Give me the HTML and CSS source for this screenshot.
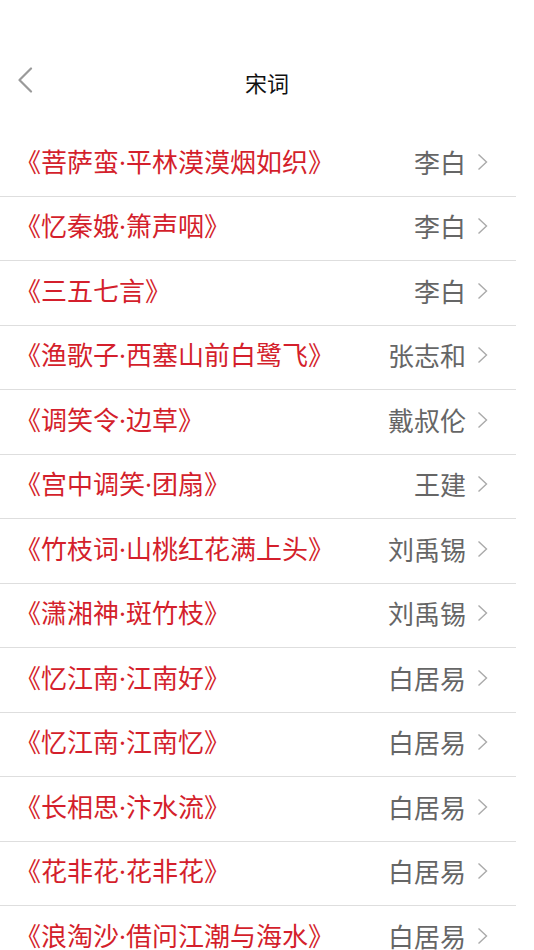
FILE: index.html
```html
<!DOCTYPE html>
<html lang="zh-CN">
<head>
<meta charset="utf-8">
<title>宋词</title>
<link rel="stylesheet" href="styles.css">
</head>
<body>
<div class="page">
  <header class="navbar">
    <span class="back">
      <svg width="16" height="26" viewBox="0 0 16 26"><path d="M14 1.5 L2.5 13 L14 24.5" fill="none" stroke="#9a9a9a" stroke-width="2.2" stroke-linecap="round" stroke-linejoin="round"/></svg>
    </span>
    <h1 class="title">宋词</h1>
  </header>
  <ul class="list">
    <li class="row"><span class="poem">《菩萨蛮·平林漠漠烟如织》</span><span class="author">李白</span><svg class="chev" width="11" height="18" viewBox="0 0 11 18"><path d="M1.5 1.5 L9.5 9 L1.5 16.5" fill="none" stroke="#aaaaaa" stroke-width="1.4"/></svg></li>
    <li class="row"><span class="poem">《忆秦娥·箫声咽》</span><span class="author">李白</span><svg class="chev" width="11" height="18" viewBox="0 0 11 18"><path d="M1.5 1.5 L9.5 9 L1.5 16.5" fill="none" stroke="#aaaaaa" stroke-width="1.4"/></svg></li>
    <li class="row"><span class="poem">《三五七言》</span><span class="author">李白</span><svg class="chev" width="11" height="18" viewBox="0 0 11 18"><path d="M1.5 1.5 L9.5 9 L1.5 16.5" fill="none" stroke="#aaaaaa" stroke-width="1.4"/></svg></li>
    <li class="row"><span class="poem">《渔歌子·西塞山前白鹭飞》</span><span class="author">张志和</span><svg class="chev" width="11" height="18" viewBox="0 0 11 18"><path d="M1.5 1.5 L9.5 9 L1.5 16.5" fill="none" stroke="#aaaaaa" stroke-width="1.4"/></svg></li>
    <li class="row"><span class="poem">《调笑令·边草》</span><span class="author">戴叔伦</span><svg class="chev" width="11" height="18" viewBox="0 0 11 18"><path d="M1.5 1.5 L9.5 9 L1.5 16.5" fill="none" stroke="#aaaaaa" stroke-width="1.4"/></svg></li>
    <li class="row"><span class="poem">《宫中调笑·团扇》</span><span class="author">王建</span><svg class="chev" width="11" height="18" viewBox="0 0 11 18"><path d="M1.5 1.5 L9.5 9 L1.5 16.5" fill="none" stroke="#aaaaaa" stroke-width="1.4"/></svg></li>
    <li class="row"><span class="poem">《竹枝词·山桃红花满上头》</span><span class="author">刘禹锡</span><svg class="chev" width="11" height="18" viewBox="0 0 11 18"><path d="M1.5 1.5 L9.5 9 L1.5 16.5" fill="none" stroke="#aaaaaa" stroke-width="1.4"/></svg></li>
    <li class="row"><span class="poem">《潇湘神·斑竹枝》</span><span class="author">刘禹锡</span><svg class="chev" width="11" height="18" viewBox="0 0 11 18"><path d="M1.5 1.5 L9.5 9 L1.5 16.5" fill="none" stroke="#aaaaaa" stroke-width="1.4"/></svg></li>
    <li class="row"><span class="poem">《忆江南·江南好》</span><span class="author">白居易</span><svg class="chev" width="11" height="18" viewBox="0 0 11 18"><path d="M1.5 1.5 L9.5 9 L1.5 16.5" fill="none" stroke="#aaaaaa" stroke-width="1.4"/></svg></li>
    <li class="row"><span class="poem">《忆江南·江南忆》</span><span class="author">白居易</span><svg class="chev" width="11" height="18" viewBox="0 0 11 18"><path d="M1.5 1.5 L9.5 9 L1.5 16.5" fill="none" stroke="#aaaaaa" stroke-width="1.4"/></svg></li>
    <li class="row"><span class="poem">《长相思·汴水流》</span><span class="author">白居易</span><svg class="chev" width="11" height="18" viewBox="0 0 11 18"><path d="M1.5 1.5 L9.5 9 L1.5 16.5" fill="none" stroke="#aaaaaa" stroke-width="1.4"/></svg></li>
    <li class="row"><span class="poem">《花非花·花非花》</span><span class="author">白居易</span><svg class="chev" width="11" height="18" viewBox="0 0 11 18"><path d="M1.5 1.5 L9.5 9 L1.5 16.5" fill="none" stroke="#aaaaaa" stroke-width="1.4"/></svg></li>
    <li class="row"><span class="poem">《浪淘沙·借问江潮与海水》</span><span class="author">白居易</span><svg class="chev" width="11" height="18" viewBox="0 0 11 18"><path d="M1.5 1.5 L9.5 9 L1.5 16.5" fill="none" stroke="#aaaaaa" stroke-width="1.4"/></svg></li>
  </ul>
</div>
</body>
</html>
```
FILE: styles.css
```css
html, body {
  margin: 0;
  padding: 0;
  background: #ffffff;
}
body {
  font-family: "Noto Sans CJK SC", "Noto Sans", sans-serif;
  overflow: hidden;
}
.page {
  width: 534px;
  height: 950px;
  overflow: hidden;
}
.navbar {
  height: 132px;
  display: flex;
  align-items: flex-start;
  justify-content: center;
  position: relative;
}
.back {
  position: absolute;
  left: 17px;
  top: 67px;
  display: block;
  line-height: 0;
}
.title {
  margin: 66px 0 0;
  font-size: 22px;
  font-weight: normal;
  line-height: 32px;
  color: #111111;
}
.list {
  list-style: none;
  margin: 0 18px 0 0;
  padding: 0;
}
.row {
  display: flex;
  align-items: center;
  box-sizing: border-box;
  height: 64.5px;
  padding: 0 28px 4px 15px;
  border-bottom: 1px solid #dedede;
  font-size: 26px;
  line-height: 34px;
}
.poem {
  flex: 1;
  color: #d41f2c;
  white-space: nowrap;
  font-family: "Noto Sans", "Noto Sans CJK SC", sans-serif;
}
.author {
  color: #666666;
  white-space: nowrap;
}
.chev {
  margin-left: 11px;
  flex: none;
}
```
